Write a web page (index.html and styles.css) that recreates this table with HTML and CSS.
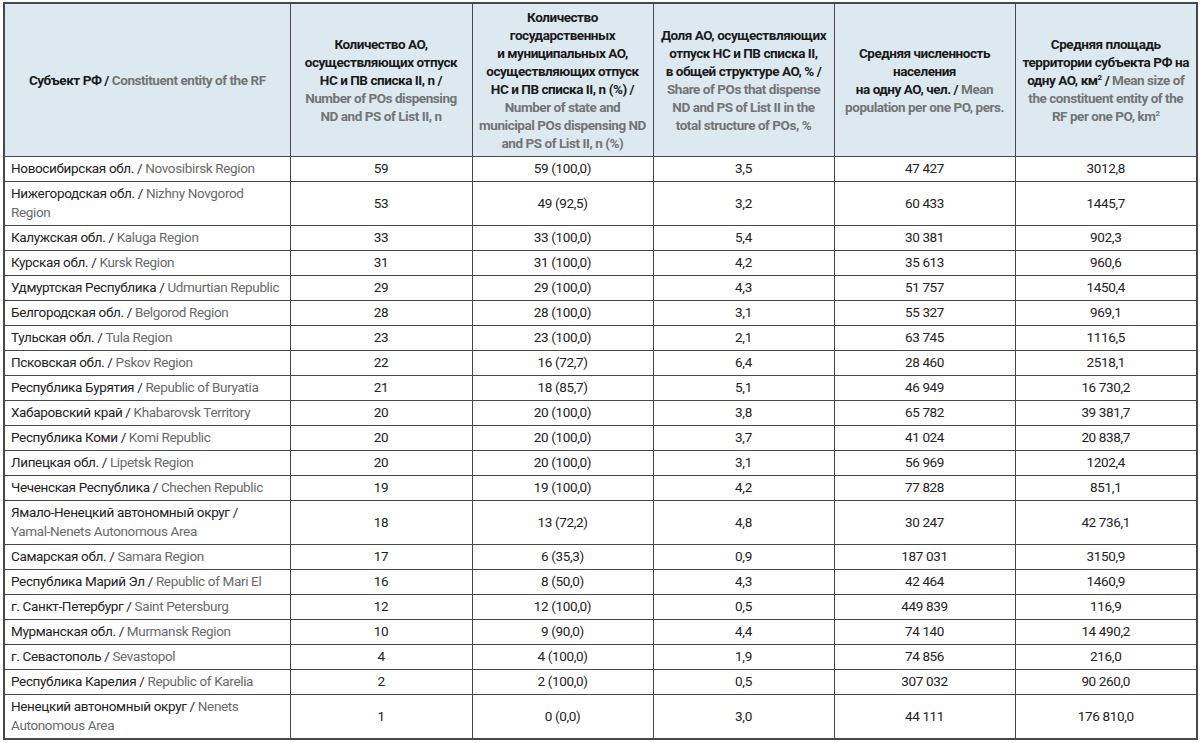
FILE: index.html
```html
<!DOCTYPE html>
<html lang="ru">
<head>
<meta charset="utf-8">
<title>Таблица</title>
<link rel="stylesheet" href="styles.css">
</head>
<body>
<table class="data">
  <colgroup>
    <col class="c1"><col class="c2"><col class="c3"><col class="c4"><col class="c5"><col class="c6">
  </colgroup>
  <thead>
    <tr>
      <th>Субъект РФ / <span class="en">Constituent entity of the RF</span></th>
      <th>Количество АО,<br>осуществляющих отпуск<br>НС и ПВ списка II, n /<br><span class="en">Number of POs dispensing<br>ND and PS of List II, n</span></th>
      <th>Количество<br>государственных<br>и муниципальных АО,<br>осуществляющих отпуск<br>НС и ПВ списка II, n (%) /<br><span class="en">Number of state and<br>municipal POs dispensing ND<br>and PS of List II, n (%)</span></th>
      <th>Доля АО, осуществляющих<br>отпуск НС и ПВ списка II,<br>в общей структуре АО, % /<br><span class="en">Share of POs that dispense<br>ND and PS of List II in the<br>total structure of POs, %</span></th>
      <th>Средняя численность<br>населения<br>на одну АО, чел. / <span class="en">Mean<br>population per one PO, pers.</span></th>
      <th>Средняя площадь<br>территории субъекта РФ на<br>одну АО, км<sup>2</sup> / <span class="en">Mean size of<br>the constituent entity of the<br>RF per one PO, km<sup>2</sup></span></th>
    </tr>
  </thead>
  <tbody>
    <tr><td>Новосибирская обл. / <span class="en">Novosibirsk Region</span></td><td>59</td><td>59 (100,0)</td><td>3,5</td><td>47 427</td><td>3012,8</td></tr>
    <tr><td>Нижегородская обл. / <span class="en">Nizhny Novgorod<br>Region</span></td><td>53</td><td>49 (92,5)</td><td>3,2</td><td>60 433</td><td>1445,7</td></tr>
    <tr><td>Калужская обл. / <span class="en">Kaluga Region</span></td><td>33</td><td>33 (100,0)</td><td>5,4</td><td>30 381</td><td>902,3</td></tr>
    <tr><td>Курская обл. / <span class="en">Kursk Region</span></td><td>31</td><td>31 (100,0)</td><td>4,2</td><td>35 613</td><td>960,6</td></tr>
    <tr><td>Удмуртская Республика / <span class="en">Udmurtian Republic</span></td><td>29</td><td>29 (100,0)</td><td>4,3</td><td>51 757</td><td>1450,4</td></tr>
    <tr><td>Белгородская обл. / <span class="en">Belgorod Region</span></td><td>28</td><td>28 (100,0)</td><td>3,1</td><td>55 327</td><td>969,1</td></tr>
    <tr><td>Тульская обл. / <span class="en">Tula Region</span></td><td>23</td><td>23 (100,0)</td><td>2,1</td><td>63 745</td><td>1116,5</td></tr>
    <tr><td>Псковская обл. / <span class="en">Pskov Region</span></td><td>22</td><td>16 (72,7)</td><td>6,4</td><td>28 460</td><td>2518,1</td></tr>
    <tr><td>Республика Бурятия / <span class="en">Republic of Buryatia</span></td><td>21</td><td>18 (85,7)</td><td>5,1</td><td>46 949</td><td>16 730,2</td></tr>
    <tr><td>Хабаровский край / <span class="en">Khabarovsk Territory</span></td><td>20</td><td>20 (100,0)</td><td>3,8</td><td>65 782</td><td>39 381,7</td></tr>
    <tr><td>Республика Коми / <span class="en">Komi Republic</span></td><td>20</td><td>20 (100,0)</td><td>3,7</td><td>41 024</td><td>20 838,7</td></tr>
    <tr><td>Липецкая обл. / <span class="en">Lipetsk Region</span></td><td>20</td><td>20 (100,0)</td><td>3,1</td><td>56 969</td><td>1202,4</td></tr>
    <tr><td>Чеченская Республика / <span class="en">Chechen Republic</span></td><td>19</td><td>19 (100,0)</td><td>4,2</td><td>77 828</td><td>851,1</td></tr>
    <tr><td>Ямало-Ненецкий автономный округ /<br><span class="en">Yamal-Nenets Autonomous Area</span></td><td>18</td><td>13 (72,2)</td><td>4,8</td><td>30 247</td><td>42 736,1</td></tr>
    <tr><td>Самарская обл. / <span class="en">Samara Region</span></td><td>17</td><td>6 (35,3)</td><td>0,9</td><td>187 031</td><td>3150,9</td></tr>
    <tr><td>Республика Марий Эл / <span class="en">Republic of Mari El</span></td><td>16</td><td>8 (50,0)</td><td>4,3</td><td>42 464</td><td>1460,9</td></tr>
    <tr><td>г. Санкт-Петербург / <span class="en">Saint Petersburg</span></td><td>12</td><td>12 (100,0)</td><td>0,5</td><td>449 839</td><td>116,9</td></tr>
    <tr><td>Мурманская обл. / <span class="en">Murmansk Region</span></td><td>10</td><td>9 (90,0)</td><td>4,4</td><td>74 140</td><td>14 490,2</td></tr>
    <tr><td>г. Севастополь / <span class="en">Sevastopol</span></td><td>4</td><td>4 (100,0)</td><td>1,9</td><td>74 856</td><td>216,0</td></tr>
    <tr><td>Республика Карелия / <span class="en">Republic of Karelia</span></td><td>2</td><td>2 (100,0)</td><td>0,5</td><td>307 032</td><td>90 260,0</td></tr>
    <tr><td>Ненецкий автономный округ / <span class="en">Nenets<br>Autonomous Area</span></td><td>1</td><td>0 (0,0)</td><td>3,0</td><td>44 111</td><td>176 810,0</td></tr>
  </tbody>
</table>
</body>
</html>
```
FILE: styles.css
```css
html, body {
  margin: 0;
  padding: 0;
  background: #ffffff;
}
body {
  padding: 2px 4px 0 3px;
  font-family: Roboto, "Liberation Sans", sans-serif;
  color: #222222;
}
.data {
  width: 1193px;
  border-collapse: collapse;
  table-layout: fixed;
  border: 2px solid #484848;
}
.c1 { width: 286px; }
.c2 { width: 182px; }
.c3 { width: 181px; }
.c4 { width: 181px; }
.c5 { width: 181px; }
.c6 { width: 182px; }
.data th {
  background: #dde9f0;
  font-weight: 700;
  font-size: 13.5px;
  letter-spacing: -0.45px;
  line-height: 18px;
  color: #1a1a1a;
  padding: 4px 2px;
  border: 1px solid #484848;
  text-align: center;
  vertical-align: middle;
  white-space: nowrap;
}
.data td {
  font-size: 13.5px;
  letter-spacing: -0.35px;
  line-height: 19px;
  padding: 2px 6px 3px;
  border: 1px solid #484848;
  text-align: center;
  vertical-align: middle;
  color: #222222;
  white-space: nowrap;
}
.data td:first-child {
  text-align: left;
}
.en {
  color: #6a6a6a;
}
th .en {
  color: #747474;
}
sup {
  font-size: 8px;
  line-height: 0;
  vertical-align: 5px;
}
```
